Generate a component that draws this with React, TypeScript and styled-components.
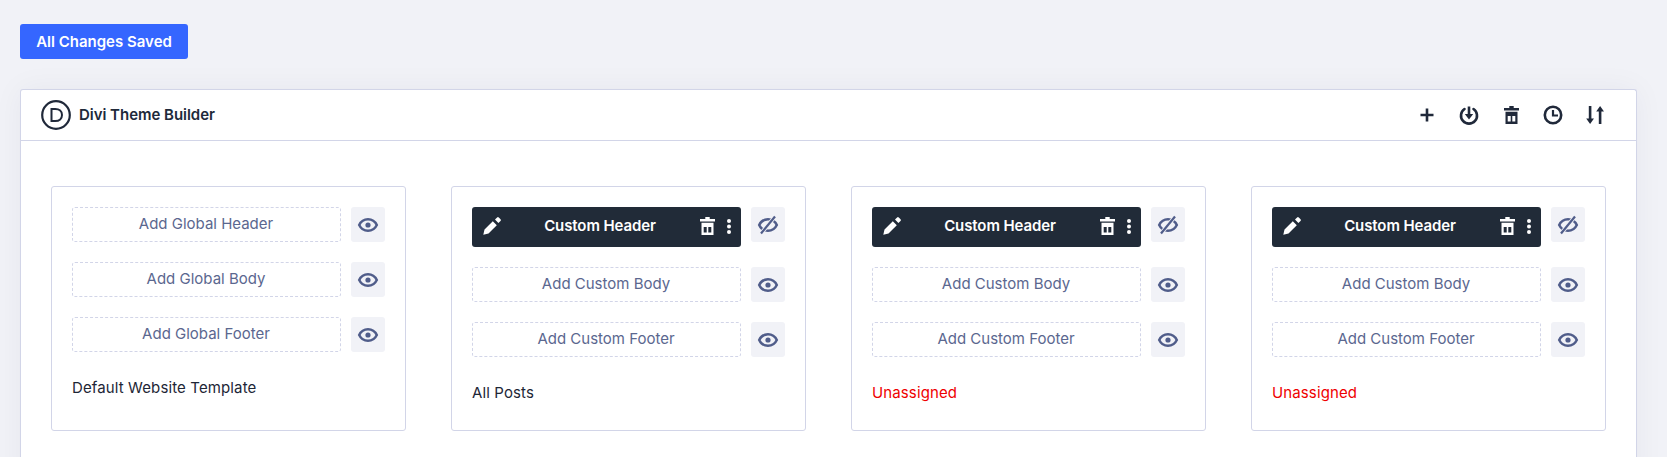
import React from "react";
import styled, { createGlobalStyle } from "styled-components";

const Global = createGlobalStyle`
  html, body { margin: 0; padding: 0; height: 457px; overflow: hidden; background: #f1f2f7; }
  body { font-family: Inter, "Liberation Sans", sans-serif; }
  * { box-sizing: border-box; }
`;

const Page = styled.div`
  padding: 24px 30px 0 20px;
`;

const SaveButton = styled.button`
  display: block;
  width: 168px;
  height: 35px;
  padding: 0;
  border: 0;
  border-radius: 3px;
  background: #3566ff;
  color: #fff;
  font: 600 15px Inter, sans-serif;
`;

const Panel = styled.section`
  margin-top: 30px;
  height: 400px;
  background: #fff;
  border: 1px solid #d2d5e8;
  border-bottom: 0;
  border-radius: 3px 3px 0 0;
  box-shadow: 0 0 30px rgba(43, 46, 80, 0.05);
`;

const PanelHeader = styled.header`
  display: flex;
  align-items: center;
  height: 51px;
  padding: 0 29px 0 20px;
  border-bottom: 1px solid #d2d5e8;
`;

const Logo = styled.svg`
  width: 30px;
  height: 30px;
  margin-right: 8px;
`;

const PanelTitle = styled.h1`
  flex: 1;
  margin: 0 0 2px;
  font-size: 15px;
  font-weight: 600;
  letter-spacing: -0.03px;
  color: #20293a;
`;

const Tools = styled.div`
  display: flex;
  align-items: center;
  gap: 18px;
  color: #20293a;
`;

const ToolIcon = styled.svg`
  display: block;
  width: 24px;
  height: 24px;
`;

const Grid = styled.div`
  display: grid;
  grid-template-columns: repeat(4, 355px);
  column-gap: 45px;
  padding: 45px 25px 0 30px;
`;

const Card = styled.article`
  height: 245px;
  padding: 20px 20px 0 20px;
  border: 1px solid #d2d5e8;
  border-radius: 3px;
`;

const Row = styled.div`
  display: grid;
  grid-template-columns: 1fr 34px;
  column-gap: 10px;
  align-items: start;
  margin-bottom: 20px;
`;

const EmptySlot = styled.div`
  height: 35px;
  display: flex;
  align-items: center;
  justify-content: center;
  padding: 0 1px 2px 0;
  border: 1px dashed #d2d5e8;
  border-radius: 3px;
  font-size: 15px;
  color: #5b678f;
`;

const FilledSlot = styled.div`
  position: relative;
  height: 40px;
  display: flex;
  align-items: center;
  justify-content: center;
  padding: 0 13px 3px 0;
  border-radius: 3px;
  background: #212b38;
  color: #fff;
  font-size: 15px;
  font-weight: 600;
  letter-spacing: -0.1px;
`;

const Pencil = styled.svg`
  position: absolute;
  left: 11px;
  top: 10px;
  width: 18px;
  height: 18px;
`;

const SlotRight = styled.div`
  position: absolute;
  right: 10px;
  top: 10px;
  display: flex;
  align-items: center;
  gap: 12px;
`;

const EyeButton = styled.div`
  width: 34px;
  height: 35px;
  display: flex;
  align-items: center;
  justify-content: center;
  border-radius: 3px;
  background: #f1f2f7;
  color: #505d8a;
`;

const CardLabel = styled.div<{ $warn?: boolean }>`
  margin-top: 27px;
  font-size: 15px;
  font-weight: 400;
  letter-spacing: 0.12px;
  line-height: 17px;
  color: ${(p) => (p.$warn ? "#ef0000" : "#1d2636")};
`;

const Eye = ({ off }: { off?: boolean }) => (
  <svg width="24" height="24" viewBox="0 0 24 24" fill="none" stroke="currentColor">
    <path d="M3.200 12c1.800-3.800 4.800-5.800 8.800-5.800s7 2 8.800 5.800c-1.800 3.800-4.800 5.800-8.800 5.800s-7-2-8.800-5.800z" strokeWidth="2.500" />
    {off ? (
      <>
        <path d="M5 20.500L19 3.500" strokeWidth="4" stroke="#f1f2f7" />
        <path d="M5 20.500L19 3.500" strokeWidth="2.200" />
      </>
    ) : (
      <circle cx="12" cy="12" r="2.600" fill="currentColor" stroke="none" />
    )}
  </svg>
);

const TrashShape = styled.svg`
  display: block;
  width: 15px;
  height: 18px;
`;

const Trash = () => (
  <TrashShape viewBox="0 0 15 18" fill="currentColor">
    <path
      d="M5.300 0h4.400v2H15v2.600H0V2h5.300zM1.500 5.700h12V18h-12zM3.700 10v5.500h3V10zM8.300 10v5.500h3V10z"
      fillRule="evenodd"
    />
  </TrashShape>
);

const KebabShape = styled.svg`
  display: block;
  width: 4px;
  height: 15px;
`;

const Kebab = () => (
  <KebabShape viewBox="0 0 4 15" fill="currentColor">
    <circle cx="2" cy="2" r="2" />
    <circle cx="2" cy="7.500" r="2" />
    <circle cx="2" cy="13" r="2" />
  </KebabShape>
);

const SlotRow = ({ label }: { label: string }) => (
  <Row>
    <EmptySlot>{label}</EmptySlot>
    <EyeButton>
      <Eye />
    </EyeButton>
  </Row>
);

const HeaderRow = () => (
  <Row>
    <FilledSlot>
      <Pencil viewBox="0 0 18 18" fill="currentColor">
        <path d="M0.300 17.700l1.200-5.200 8.300-8.300 4 4-8.300 8.300zM12 2.600l2.100-2.100a1.200 1.200 0 0 1 1.700 0l1.700 1.700a1.200 1.200 0 0 1 0 1.700l-2.100 2.100z" />
      </Pencil>
      Custom Header
      <SlotRight>
        <Trash />
        <Kebab />
      </SlotRight>
    </FilledSlot>
    <EyeButton>
      <Eye off />
    </EyeButton>
  </Row>
);

const HeaderTrash = styled.div`
  width: 24px;
  display: flex;
  justify-content: center;
`;

const cards = [
  { global: true, label: "Default Website Template" },
  { global: false, label: "All Posts" },
  { global: false, label: "Unassigned", warn: true },
  { global: false, label: "Unassigned", warn: true },
];

export default function App() {
  return (
    <Page>
      <Global />
      <SaveButton>All Changes Saved</SaveButton>
      <Panel>
        <PanelHeader>
          <Logo viewBox="0 0 30 30" fill="none" stroke="#20293a">
            <circle cx="15" cy="15" r="13.800" strokeWidth="2.200" />
            <path d="M10.500 9h3.800c4 0 6.700 2.300 6.700 6s-2.700 6-6.700 6h-3.800z" strokeWidth="2" />
          </Logo>
          <PanelTitle>Divi Theme Builder</PanelTitle>
          <Tools>
            <ToolIcon viewBox="0 0 24 24" stroke="currentColor" strokeWidth="2.600" fill="none">
              <path d="M12 5.500v13M5.500 12h13" />
            </ToolIcon>
            <ToolIcon viewBox="0 0 24 24" stroke="currentColor" fill="none">
              <path d="M7.500 6a8 8 0 1 0 9 0" strokeWidth="2.600" strokeLinecap="round" />
              <path d="M12 3.500v9" strokeWidth="2.600" />
              <path d="M7.800 11h8.400L12 16.500z" fill="currentColor" stroke="none" />
            </ToolIcon>
            <HeaderTrash>
              <Trash />
            </HeaderTrash>
            <ToolIcon viewBox="0 0 24 24" stroke="currentColor" fill="none" strokeWidth="2.600">
              <circle cx="12" cy="12" r="8.200" />
              <path d="M12 7v5.500h5" strokeWidth="2.200" />
            </ToolIcon>
            <ToolIcon viewBox="0 0 24 24" fill="currentColor">
              <path d="M5.800 3h2.600v12.500h2.600L7.100 21l-3.900-5.500h2.600zM15.800 21V8.500h-2.600L17.100 3l3.900 5.500h-2.600V21z" />
            </ToolIcon>
          </Tools>
        </PanelHeader>
        <Grid>
          {cards.map((c, i) => (
            <Card key={i}>
              {c.global ? (
                <>
                  <SlotRow label="Add Global Header" />
                  <SlotRow label="Add Global Body" />
                  <SlotRow label="Add Global Footer" />
                </>
              ) : (
                <>
                  <HeaderRow />
                  <SlotRow label="Add Custom Body" />
                  <SlotRow label="Add Custom Footer" />
                </>
              )}
              <CardLabel $warn={c.warn}>{c.label}</CardLabel>
            </Card>
          ))}
        </Grid>
      </Panel>
    </Page>
  );
}
